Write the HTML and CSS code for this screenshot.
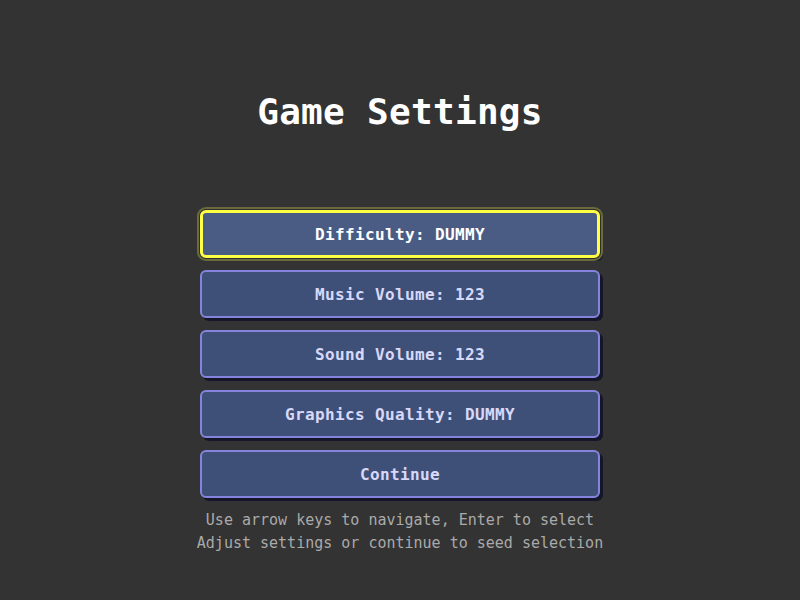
FILE: index.html
```html
<!DOCTYPE html>
<html>
<head>
<meta charset="utf-8">
<link rel="stylesheet" href="styles.css">
</head>
<body>
<main class="screen">
  <h1 class="title">Game Settings</h1>
  <div class="menu">
    <div class="item selected">Difficulty: DUMMY</div>
    <div class="item">Music Volume: 123</div>
    <div class="item">Sound Volume: 123</div>
    <div class="item">Graphics Quality: DUMMY</div>
    <div class="item">Continue</div>
  </div>
  <div class="help">
    <div>Use arrow keys to navigate, Enter to select</div>
    <div>Adjust settings or continue to seed selection</div>
  </div>
</main>
</body>
</html>
```
FILE: styles.css
```css
html, body {
  margin: 0;
  padding: 0;
  background: #333333;
}
.screen {
  width: 800px;
  height: 600px;
  display: flex;
  flex-direction: column;
  align-items: center;
  font-family: "DejaVu Sans Mono", monospace;
}
.title {
  margin: 90px 0 0 0;
  font-size: 36px;
  line-height: 44px;
  font-weight: bold;
  letter-spacing: 0.3px;
  color: #ffffff;
}
.menu {
  margin-top: 76px;
  display: flex;
  flex-direction: column;
  gap: 12px;
}
.item {
  box-sizing: border-box;
  width: 400px;
  height: 48px;
  border: 2px solid #8484dc;
  border-radius: 6px;
  background: #3e5078;
  color: #d8d8f8;
  font-size: 16px;
  font-weight: bold;
  letter-spacing: 0.36px;
  display: flex;
  align-items: center;
  justify-content: center;
  box-shadow: 3px 3px 0 #16162a;
}
.item.selected {
  border: 3px solid #ffff44;
  background: #4a5c84;
  color: #ffffff;
  box-shadow: 0 0 0 1px #2e2e2a, 0 0 0 3px #6a6a3c, 3px 3px 0 #16162a;
}
.help {
  margin-top: 11px;
  text-align: center;
  color: #aaaaaa;
  font-size: 15px;
  line-height: 23px;
}
```
